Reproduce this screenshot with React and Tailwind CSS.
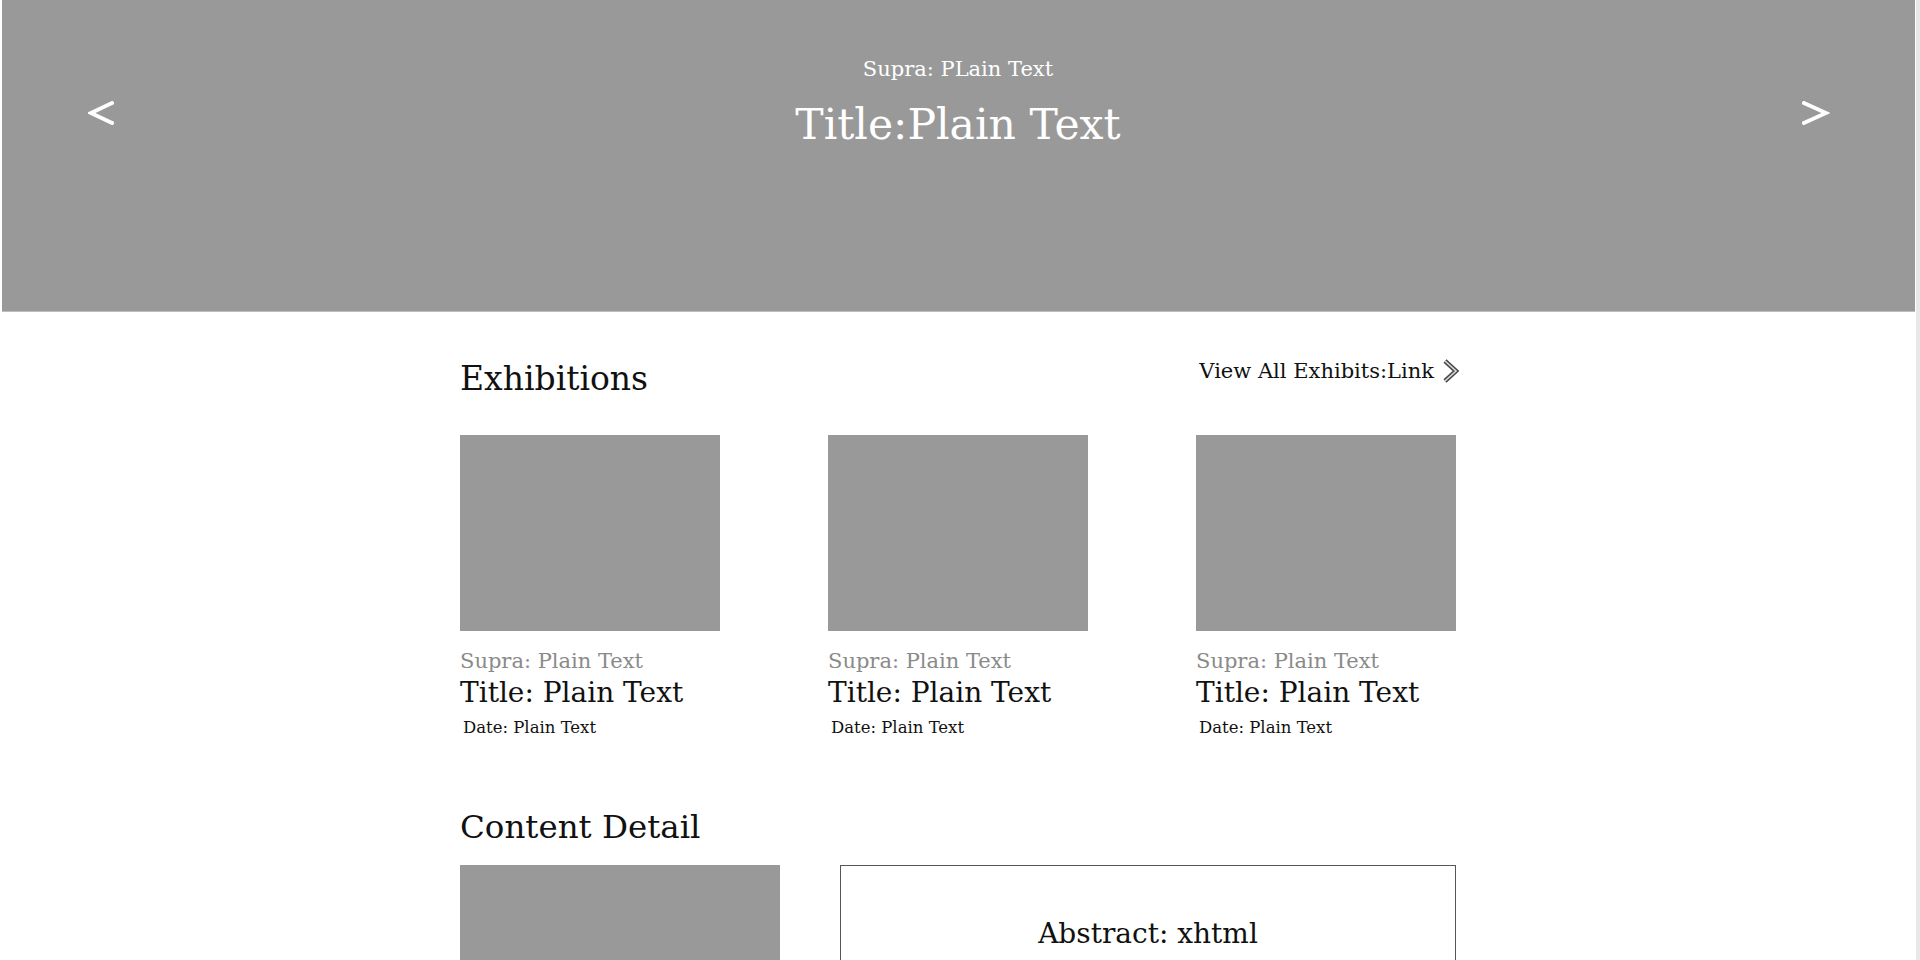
import React from "react";

const serif = { fontFamily: '"DejaVu Serif", "Liberation Serif", serif' };

function ArrowLeft() {
  return (
    <svg width="26" height="24" viewBox="0 0 26 24" className="block">
      <polyline points="24,2 3,12 24,22" fill="none" stroke="#ffffff" strokeWidth="3.8" strokeLinecap="square" strokeLinejoin="miter" />
    </svg>
  );
}

function ArrowRight() {
  return (
    <svg width="28" height="24" viewBox="0 0 28 24" className="block">
      <polyline points="2,2 24,12 2,22" fill="none" stroke="#ffffff" strokeWidth="3.8" strokeLinecap="square" strokeLinejoin="miter" />
    </svg>
  );
}

function OutlineChevron() {
  return (
    <svg width="18" height="24" viewBox="0 0 18 24" className="block">
      <polyline points="3,2 14,12 3,22" fill="none" stroke="#4a4a4a" strokeWidth="4.5" strokeLinejoin="miter" />
      <polyline points="3,2 14,12 3,22" fill="none" stroke="#d9d9d9" strokeWidth="1.6" strokeLinejoin="miter" />
    </svg>
  );
}

function Card() {
  return (
    <div className="w-[260px] flex flex-col">
      <div className="h-[196px] bg-[#999999]" />
      <div className="mt-[18px] text-[21px] leading-[24px] text-[#8a8a8a]">Supra: Plain Text</div>
      <div className="mt-[4px] text-[28px] leading-[32px] text-[#111]">Title: Plain Text</div>
      <div className="mt-[9px] pl-[3px] text-[16.5px] leading-[20px] text-[#111]">Date: Plain Text</div>
    </div>
  );
}

export default function App() {
  return (
    <div className="h-screen overflow-hidden bg-white border-r-4 border-[#e8e8e8]" style={serif}>
      <div className="ml-[2px] mr-[1px] h-[312px] bg-[#999999] border-b border-[#bdbdbd] flex items-start justify-between pl-[86px] pr-[85px]">
        <div className="mt-[101px]">
          <ArrowLeft />
        </div>
        <div className="flex flex-col items-center text-white">
          <div className="mt-[57px] text-[21px] leading-[24px]">Supra: PLain Text</div>
          <div className="mt-[18px] text-[42.5px] leading-[52px]">Title:Plain Text</div>
        </div>
        <div className="mt-[101px]">
          <ArrowRight />
        </div>
      </div>

      <div className="w-[1000px] ml-[460px]">
        <div className="mt-[47px] flex items-start justify-between">
          <h2 className="text-[33px] leading-[40px] text-[#111]">Exhibitions</h2>
          <a className="flex items-center gap-[8px] text-[21px] leading-[24px] text-[#111]">
            <span>View All Exhibits:Link</span>
            <OutlineChevron />
          </a>
        </div>

        <div className="mt-[36px] flex gap-[108px]">
          <Card />
          <Card />
          <Card />
        </div>

        <h2 className="mt-[69px] text-[32.5px] leading-[40px] text-[#111]">Content Detail</h2>

        <div className="mt-[18px] flex gap-[60px]">
          <div className="w-[320px] h-[200px] bg-[#999999]" />
          <div className="w-[616px] h-[200px] border border-[#555] flex justify-center">
            <div className="mt-[52px] text-[28px] leading-[32px] text-[#111]">Abstract: xhtml</div>
          </div>
        </div>
      </div>
    </div>
  );
}
